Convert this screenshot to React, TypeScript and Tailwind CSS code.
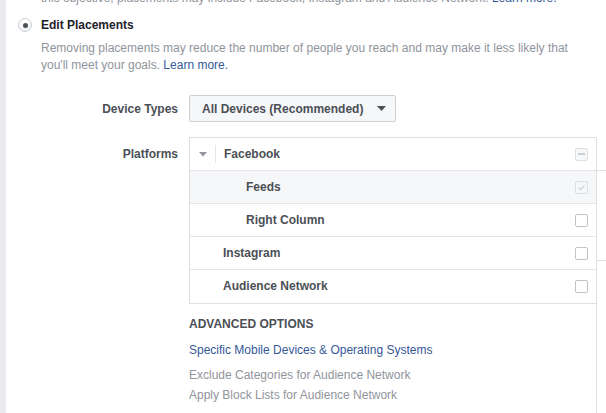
import React from "react";

const font = { fontFamily: '"Liberation Sans", Arial, Helvetica, sans-serif' };

function Box({ state }: { state: "none" | "indet" | "checked" }) {
  if (state === "indet") {
    return (
      <div className="w-[13px] h-[13px] rounded-[2px] border border-[#dddfe2] bg-[#f6f7f9] flex items-center justify-center">
        <div className="w-[7px] h-[2px] bg-[#ccd0d5]" />
      </div>
    );
  }
  if (state === "checked") {
    return (
      <div className="w-[13px] h-[13px] rounded-[2px] border border-[#dddfe2] bg-[#f6f7f9] flex items-center justify-center">
        <svg width="9" height="9" viewBox="0 0 9 9">
          <path d="M1.5 4.8 L3.6 6.6 L7.5 2.4" fill="none" stroke="#ccd0d5" strokeWidth="1.2" />
        </svg>
      </div>
    );
  }
  return <div className="w-[13px] h-[13px] rounded-[2px] border border-[#bec3c9] bg-white" />;
}

function Row({
  label,
  indent,
  state,
  bg,
  caret,
  last,
}: {
  label: string;
  indent: number;
  state: "none" | "indet" | "checked";
  bg?: boolean;
  caret?: boolean;
  last?: boolean;
}) {
  return (
    <div
      className={
        "h-[33px] flex items-center pr-[8px] " +
        (last ? "" : "border-b border-[#e5e6e9] ") +
        (bg ? "bg-[#f6f7f9]" : "bg-white")
      }
    >
      {caret ? (
        <div className="flex items-center pl-[9px]">
          <svg width="8" height="5" viewBox="0 0 8 5" className="mr-[8px]">
            <path d="M0 0 L8 0 L4 4.5 Z" fill="#90949c" />
          </svg>
          <div className="w-px h-[18px] bg-[#e5e6e9] mr-[8px]" />
        </div>
      ) : (
        <div style={{ width: indent }} />
      )}
      <div className="flex-1 text-[12px] leading-[16px] font-bold text-[#4b4f56] mt-[-1px]">{label}</div>
      <Box state={state} />
    </div>
  );
}

export default function App() {
  return (
    <div className="relative w-[606px] h-[413px] overflow-hidden bg-white flex" style={font}>
      <div className="w-[6px] bg-[#e9ebee] shrink-0" />
      <div className="flex-1 pl-[35px]">
        <div className="mt-[-10px] h-[16px] leading-[16px] text-[12px] text-[#90949c] whitespace-nowrap">
          this objective, placements may include Facebook, Instagram and Audience Network.{" "}
          <span className="text-[#365899]">Learn more.</span>
        </div>
        <div className="mt-[11px] h-[16px] flex items-center relative">
          <div className="absolute left-[-23px] top-[1px] w-[14px] h-[14px] rounded-full border border-[#ccd0d5] bg-gradient-to-b from-white to-[#f1f2f4] flex items-center justify-center">
            <div className="w-[5px] h-[5px] rounded-full bg-[#4b4f56]" />
          </div>
          <span className="text-[12px] font-bold text-[#1d2129]">Edit Placements</span>
        </div>
        <div className="mt-[7px] text-[12px] leading-[17px] text-[#90949c] w-[545px]">
          Removing placements may reduce the number of people you reach and may make it less likely that
          you'll meet your goals. <span className="text-[#365899]">Learn more.</span>
        </div>
        <div className="mt-[21px] flex items-center">
          <div className="w-[137px] text-right text-[12px] font-bold text-[#4b4f56]">Device Types</div>
          <div className="ml-[11px] w-[207px] h-[27px] rounded-[2px] border border-[#ccd0d5] bg-[#f6f7f9] flex items-center pl-[12px] pr-[9px]">
            <span className="flex-1 text-[12px] font-bold text-[#4b4f56]">All Devices (Recommended)</span>
            <svg width="9" height="5" viewBox="0 0 9 5">
              <path d="M0 0 L9 0 L4.5 5 Z" fill="#4b4f56" />
            </svg>
          </div>
        </div>
        <div className="mt-[15px] flex items-start">
          <div className="w-[137px] h-[33px] flex items-center justify-end text-[12px] font-bold text-[#4b4f56]">
            Platforms
          </div>
          <div className="ml-[11px] w-[408px] border border-[#dddfe2]">
            <Row label="Facebook" indent={0} state="indet" caret />
            <Row label="Feeds" indent={56} state="checked" bg />
            <Row label="Right Column" indent={56} state="none" />
            <Row label="Instagram" indent={33} state="none" />
            <Row label="Audience Network" indent={33} state="none" last />
          </div>
        </div>
        <div className="ml-[148px]">
          <div className="mt-[12px] h-[16px] leading-[16px] text-[12px] font-bold text-[#4b4f56]">ADVANCED OPTIONS</div>
          <div className="mt-[10px] h-[16px] leading-[16px] text-[12px] text-[#365899]">
            Specific Mobile Devices &amp; Operating Systems
          </div>
          <div className="mt-[9px] h-[16px] leading-[16px] text-[12px] text-[#90949c]">
            Exclude Categories for Audience Network
          </div>
          <div className="mt-[4px] h-[16px] leading-[16px] text-[12px] text-[#90949c]">
            Apply Block Lists for Audience Network
          </div>
        </div>
      </div>
      <div className="absolute left-[596px] top-[137px] w-[10px] h-[276px] border-l border-[#dddfe2]">
        <div className="absolute left-0 top-[33px] w-[10px] h-px bg-[#dddfe2]" />
        <div className="absolute left-0 top-[123px] w-[10px] h-px bg-[#dddfe2]" />
      </div>
    </div>
  );
}
